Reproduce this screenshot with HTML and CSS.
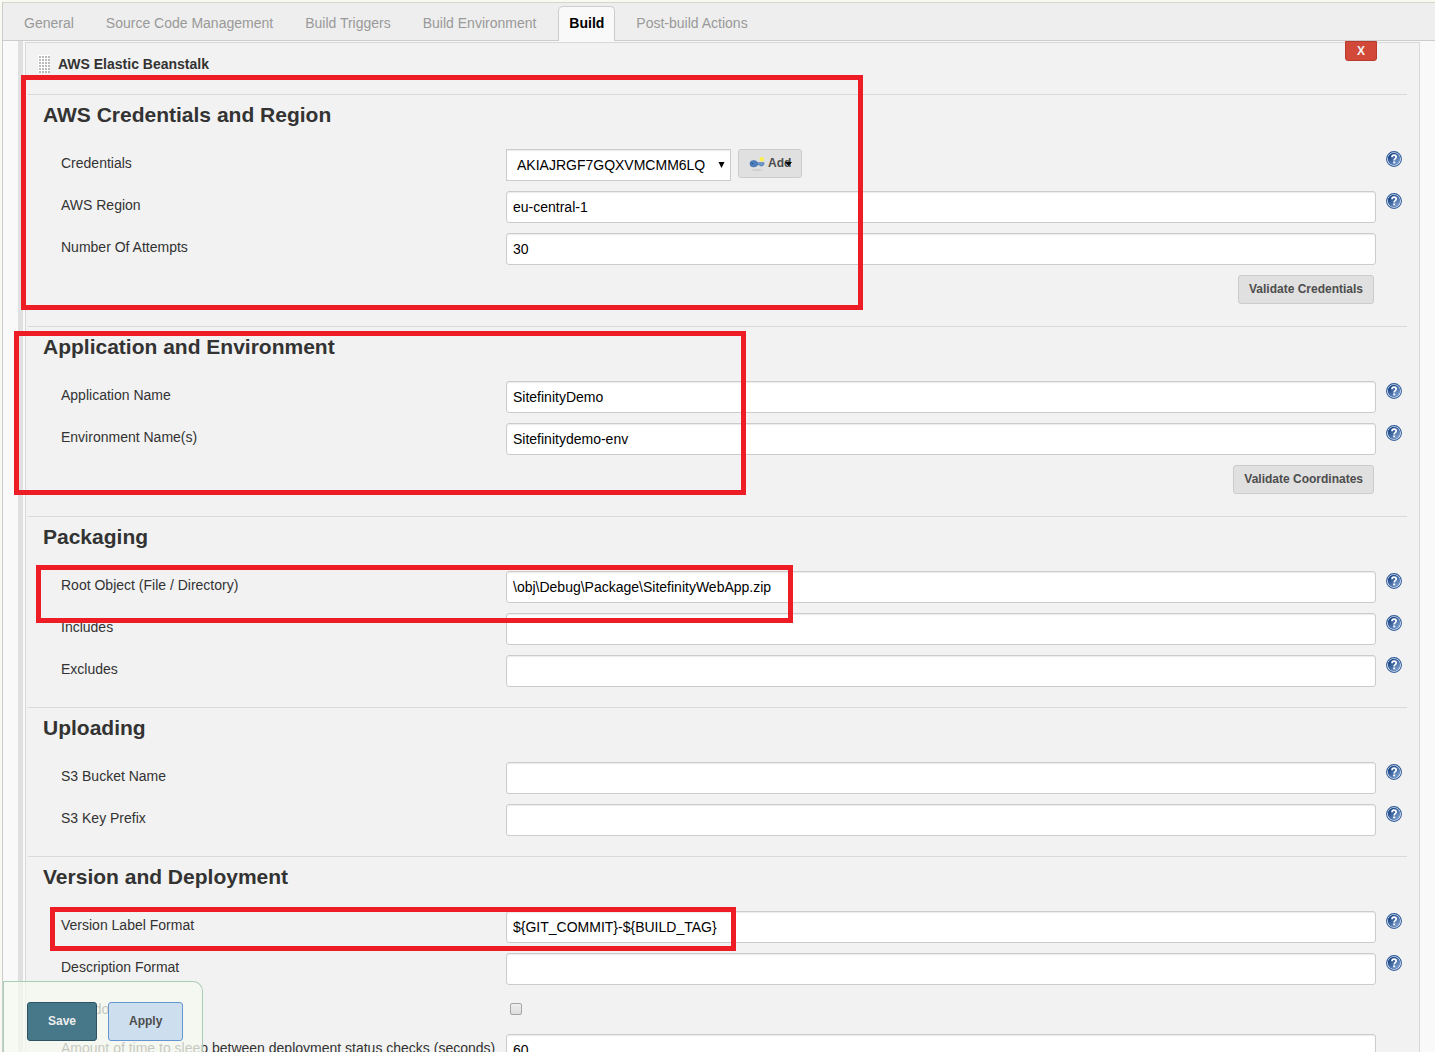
FILE: index.html
```html
<!DOCTYPE html>
<html lang="en">
<head>
  <meta charset="UTF-8" />
  <title>Build configuration</title>
  <link rel="stylesheet" href="styles.css">
</head>
<body>

  <svg class="defs" aria-hidden="true">
    <defs>
      <linearGradient id="helpFill" x1="0" y1="0" x2="1" y2="1">
        <stop offset="0.2" stop-color="#1d4888" />
        <stop offset="1" stop-color="#8fb0dc" />
      </linearGradient>
      <symbol id="help" viewBox="0 0 16 16">
        <circle cx="8" cy="8" r="7.4" fill="#fff" stroke="#2f5b9b" stroke-width="1.1" />
        <circle cx="8" cy="8" r="6.200" fill="url(#helpFill)" />
        <path d="M6 6.200C6 4.900 6.800 4.200 8 4.200s2.200.8 2.200 1.900c0 1.500-2 1.700-2 3.300" fill="none" stroke="#fff" stroke-width="1.700" />
        <rect x="7.200" y="10.500" width="2" height="1.800" fill="#fff" />
      </symbol>
    </defs>
  </svg>

  <div class="config">
    <nav class="tabs">
      <a class="tab" href="#general">General</a>
      <a class="tab" href="#scm">Source Code Management</a>
      <a class="tab" href="#triggers">Build Triggers</a>
      <a class="tab" href="#environment">Build Environment</a>
      <a class="tab active" href="#build">Build</a>
      <a class="tab" href="#post-build">Post-build Actions</a>
    </nav>

    <form class="steps">
      <div class="step">
        <button type="button" class="delete">X</button>
        <div class="step-title"><span class="handle"></span>AWS Elastic Beanstalk</div>

        <section class="section">
          <h2>AWS Credentials and Region</h2>
          <div class="row">
            <label for="credentials">Credentials</label>
            <div class="field">
              <div class="select-wrap">
                <select id="credentials">
                  <option>AKIAJRGF7GQXVMCMM6LQ</option>
                </select>
                <svg class="arrow" viewBox="0 0 7 7"><path d="M0 0h7L3.500 7z" /></svg>
              </div>
              <button type="button" class="btn add">
                <svg class="key" viewBox="0 0 16 16">
                  <ellipse cx="8" cy="15" rx="6" ry="0.800" fill="#c8c8c8" />
                  <path d="M7 7.500h8v2.500h-1.500v1H11v-1H7z" fill="#6c98cc" stroke="#4a74aa" stroke-width=".5" />
                  <ellipse cx="4.700" cy="8.700" rx="3.800" ry="3.300" fill="#4d7fbe" stroke="#3b669f" stroke-width=".5" />
                  <circle cx="3.200" cy="8.500" r=".8" fill="#27508a" />
                  <circle cx="12.800" cy="4.200" r="2.200" fill="#fbf04a" />
                </svg>
                Add
                <svg class="caret" viewBox="0 0 7 6"><path d="M0 2h7L3.500 6z" /></svg>
              </button>
            </div>
            <a class="help" href="#help" aria-label="Help"><svg><use href="#help" /></svg></a>
          </div>
          <div class="row">
            <label for="region">AWS Region</label>
            <input type="text" id="region" value="eu-central-1" />
            <a class="help" href="#help" aria-label="Help"><svg><use href="#help" /></svg></a>
          </div>
          <div class="row">
            <label for="attempts">Number Of Attempts</label>
            <input type="text" id="attempts" value="30" />
          </div>
          <div class="actions"><button type="button" class="btn">Validate Credentials</button></div>
          <div class="mark mark-credentials"></div>
        </section>

        <section class="section">
          <h2>Application and Environment</h2>
          <div class="row">
            <label for="app">Application Name</label>
            <input type="text" id="app" value="SitefinityDemo" />
            <a class="help" href="#help" aria-label="Help"><svg><use href="#help" /></svg></a>
          </div>
          <div class="row">
            <label for="env">Environment Name(s)</label>
            <input type="text" id="env" value="Sitefinitydemo-env" />
            <a class="help" href="#help" aria-label="Help"><svg><use href="#help" /></svg></a>
          </div>
          <div class="actions"><button type="button" class="btn">Validate Coordinates</button></div>
          <div class="mark mark-application"></div>
        </section>

        <section class="section">
          <h2>Packaging</h2>
          <div class="row">
            <label for="root">Root Object (File / Directory)</label>
            <input type="text" id="root" value="\obj\Debug\Package\SitefinityWebApp.zip" />
            <a class="help" href="#help" aria-label="Help"><svg><use href="#help" /></svg></a>
          </div>
          <div class="row">
            <label for="includes">Includes</label>
            <input type="text" id="includes" />
            <a class="help" href="#help" aria-label="Help"><svg><use href="#help" /></svg></a>
          </div>
          <div class="row">
            <label for="excludes">Excludes</label>
            <input type="text" id="excludes" />
            <a class="help" href="#help" aria-label="Help"><svg><use href="#help" /></svg></a>
          </div>
          <div class="mark mark-root"></div>
        </section>

        <section class="section">
          <h2>Uploading</h2>
          <div class="row">
            <label for="bucket">S3 Bucket Name</label>
            <input type="text" id="bucket" />
            <a class="help" href="#help" aria-label="Help"><svg><use href="#help" /></svg></a>
          </div>
          <div class="row">
            <label for="prefix">S3 Key Prefix</label>
            <input type="text" id="prefix" />
            <a class="help" href="#help" aria-label="Help"><svg><use href="#help" /></svg></a>
          </div>
        </section>

        <section class="section">
          <h2>Version and Deployment</h2>
          <div class="row">
            <label for="version">Version Label Format</label>
            <input type="text" id="version" value="${GIT_COMMIT}-${BUILD_TAG}" />
            <a class="help" href="#help" aria-label="Help"><svg><use href="#help" /></svg></a>
          </div>
          <div class="row">
            <label for="description">Description Format</label>
            <input type="text" id="description" />
            <a class="help" href="#help" aria-label="Help"><svg><use href="#help" /></svg></a>
          </div>
          <div class="row check-row">
            <label for="zero">Zero downtime</label>
            <input type="checkbox" id="zero" />
          </div>
          <div class="row">
            <label for="sleep">Amount of time to sleep between deployment status checks (seconds)</label>
            <input type="text" id="sleep" value="60" />
          </div>
          <div class="mark mark-version"></div>
        </section>
      </div>
    </form>
  </div>

  <div class="save-bar">
    <button type="button" class="save">Save</button>
    <button type="button" class="apply">Apply</button>
  </div>

</body>
</html>
```
FILE: styles.css
```css
* {
  box-sizing: border-box;
}
body {
  margin: 0;
  padding: 2px 0 0 2px;
  height: 100vh;
  overflow: hidden;
  background: #f8faf2;
  color: #333;
  font-family: "Liberation Sans", Arial, sans-serif;
  font-size: 14px;
  line-height: 16px;
}
input, select, button {
  font-family: inherit;
  margin: 0;
}
.defs {
  position: absolute;
  width: 0;
  height: 0;
}
.config {
  border-top: 1px solid #d3d9ca;
  border-left: 1px solid #ccc;
  background: #f9f9f9;
}

/* tabs */
.tabs {
  display: flex;
  align-items: flex-end;
  height: 38px;
  padding-left: 5px;
  background: #eee;
  border-bottom: 1px solid #ccc;
}
.tab {
  height: 35px;
  margin-bottom: -1px;
  padding: 9px 16px;
  color: #999;
  text-decoration: none;
}
.tab.active {
  padding: 8px 10px;
  margin-left: 6px;
  margin-right: 5px;
  background: #f9f9f9;
  border: 1px solid #ccc;
  border-bottom: none;
  border-radius: 5px 5px 0 0;
  color: #000;
  font-weight: bold;
}

/* build step */
.steps {
  margin-left: 15px;
  padding: 1px 15px 0 2px;
  border-left: 5px solid #e0e0e0;
}
.step {
  position: relative;
  padding: 0 12px 0 2px;
  background: #f2f2f2;
  border: 1px solid #d8d8d8;
}
.step-title {
  display: flex;
  align-items: center;
  gap: 8px;
  height: 51px;
  padding: 0 0 10px 10px;
  font-weight: bold;
}
.handle {
  width: 12px;
  height: 18px;
  background:
    linear-gradient(90deg, #fff 1px, transparent 1px) 0 0 / 3px 3px,
    linear-gradient(#fff 1px, #bbb 1px) 0 0 / 3px 3px;
}
.delete {
  position: absolute;
  top: -2px;
  right: 42px;
  width: 32px;
  height: 20px;
  padding: 0 0 1px;
  background: #d24939;
  border: 1px solid #b93a2b;
  border-radius: 0 0 3px 3px;
  color: #f2f2f2;
  font-size: 12px;
  font-weight: bold;
}
.section {
  position: relative;
  padding-bottom: 20px;
  border-top: 1px solid #d9d9d9;
}
.section h2 {
  margin: 0;
  padding: 8px 0 22px 15px;
  font-size: 21px;
  line-height: 24px;
}
.row {
  display: grid;
  grid-template-columns: 445px 1fr 31px;
  min-height: 32px;
  margin-bottom: 10px;
  padding-left: 33px;
}
.row:last-of-type, .row:has(+ .mark) {
  margin-bottom: 0;
}
.row label {
  padding-top: 6px;
  white-space: nowrap;
}
.row input[type="text"], .row select {
  height: 32px;
  padding: 0 6px 1px;
  background: #fff;
  border: 1px solid #ccc;
  border-radius: 3px;
  box-shadow: inset 0 1px 1px rgba(0, 0, 0, 0.08);
  color: #000;
  font-size: 14px;
}
.field {
  display: flex;
  gap: 7px;
}
.select-wrap {
  position: relative;
}
.row select {
  width: 225px;
  padding-left: 10px;
  appearance: none;
  border-radius: 0;
}
.arrow {
  position: absolute;
  top: 13px;
  right: 6px;
  width: 7px;
  height: 6px;
}
.btn {
  height: 29px;
  padding: 0 10px 2px;
  background: #e0e0e0;
  border: 1px solid #ccc;
  border-radius: 3px;
  color: #4d4d4d;
  font-size: 12px;
  font-weight: bold;
}
.add {
  position: relative;
  display: flex;
  align-items: center;
  gap: 3px;
  width: 64px;
}
.key {
  flex: none;
  width: 16px;
  height: 16px;
}
.caret {
  position: absolute;
  top: 10px;
  right: 9px;
  width: 7px;
  height: 6px;
}
.help {
  padding: 2px 0 0 10px;
}
.help svg {
  display: block;
  width: 16px;
  height: 16px;
}
.actions {
  display: flex;
  justify-content: flex-end;
  height: 31px;
  padding-right: 33px;
}
.check-row {
  min-height: 29px;
}
.check-row input {
  appearance: none;
  width: 12px;
  height: 12px;
  margin: 8px 4px;
  background: linear-gradient(#eee, #ddd);
  border: 1px solid #a5a5a5;
  border-radius: 2px;
}

/* red highlight frames drawn over the form */
.mark {
  position: absolute;
  border: 5px solid #ee1c24;
  pointer-events: none;
}
.mark-credentials {
  top: -20px;
  left: -7px;
  width: 842px;
  height: 235px;
}
.mark-application {
  top: 4px;
  left: -14px;
  width: 732px;
  height: 164px;
}
.mark-root {
  top: 48px;
  left: 8px;
  width: 757px;
  height: 58px;
}
.mark-version {
  top: 50px;
  left: 22px;
  width: 686px;
  height: 44px;
}

/* sticky save bar */
.save-bar {
  position: fixed;
  left: 3px;
  bottom: 0;
  display: flex;
  gap: 11px;
  padding: 20px 19px 11px 23px;
  background: rgba(245, 249, 239, 0.75);
  border: 1px solid #a9cdb5;
  border-bottom: none;
  border-radius: 0 10px 0 0;
}
.save-bar button {
  height: 39px;
  padding: 0 20px 2px;
  border-radius: 3px;
  font-size: 12px;
  font-weight: bold;
}
.save {
  background: #467889;
  border: 1px solid #2c5366;
  color: #eee;
}
.apply {
  background: #cddeee;
  border: 1px solid #6496d2;
  color: #4d4d4d;
}
```
